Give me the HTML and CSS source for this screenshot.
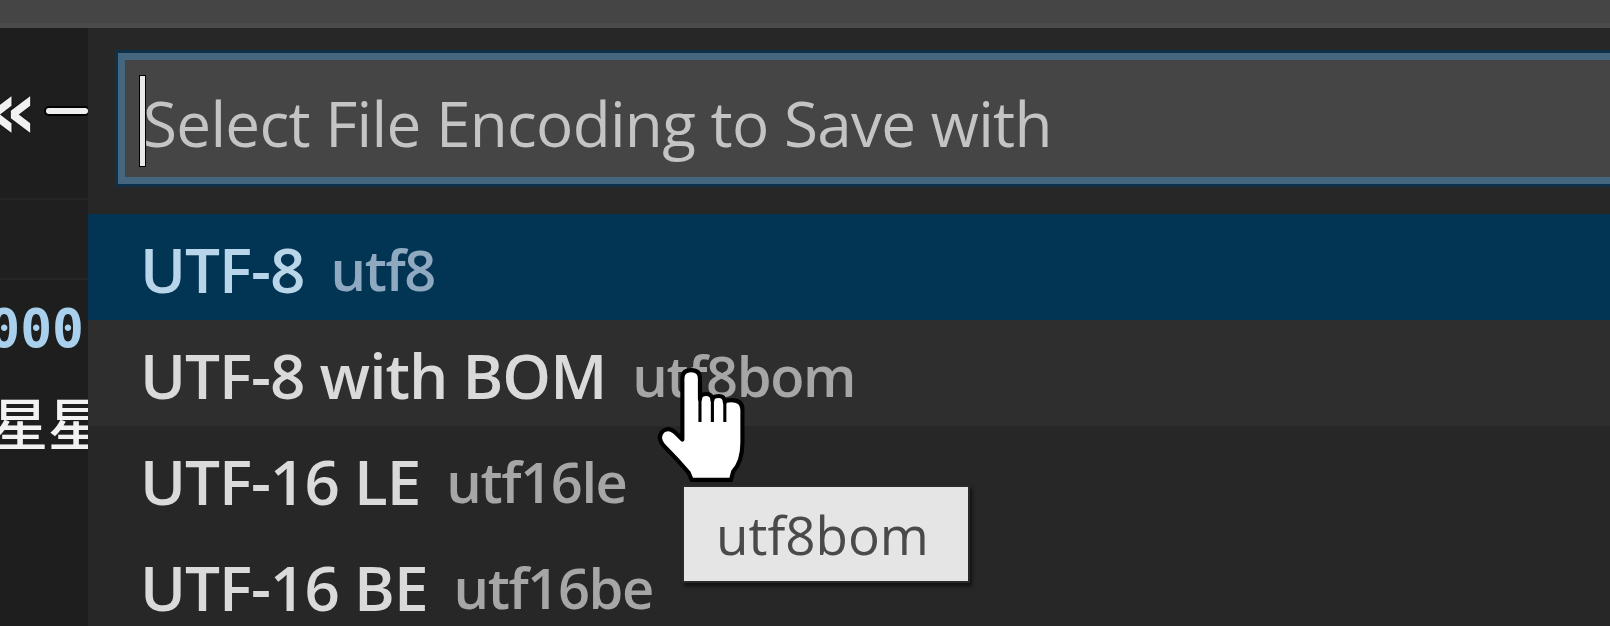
FILE: index.html
```html
<!DOCTYPE html>
<html>
<head>
<meta charset="utf-8">
<link rel="stylesheet" href="styles.css">
</head>
<body>
<div class="topbar"></div>
<div class="main">
  <div class="editor">
    <div class="line line-a"><span class="chev">«</span><span class="dash"></span></div>
    <div class="line line-cur"></div>
    <div class="line line-num"><span>2000</span></div>
    <div class="line line-cjk"><span>星星</span></div>
  </div>
  <div class="quickpick">
    <div class="inputbox">
      <span class="caret"></span>
      <span class="placeholder">Select File Encoding to Save with</span>
    </div>
    <div class="list">
      <div class="row selected"><span class="label">UTF-8</span><span class="desc">utf8</span></div>
      <div class="row hover"><span class="label">UTF-8 with BOM</span><span class="desc">utf8bom</span></div>
      <div class="row"><span class="label">UTF-16 LE</span><span class="desc">utf16le</span></div>
      <div class="row"><span class="label">UTF-16 BE</span><span class="desc">utf16be</span></div>
    </div>
  </div>
</div>
<div class="tooltip">utf8bom</div>
<svg class="hand" width="96" height="116" viewBox="-4 -4 90 112">
  <path d="M23,8 Q23,0 31.5,0 Q40,0 40,8 L40,28 Q40,23 46,23 Q52,23 52,29 Q52,25 58,25 Q64,25 64,31 Q64,29 70,29 Q81,29 81,38 L81,70 Q81,88 72,98 L70,106 L32,106 L29,99 Q18,86 5,73 Q-2,65 4,59 Q10,54 17,61 L23,67 Z" fill="#ffffff" stroke="#000000" stroke-width="4" stroke-linejoin="round"/>
  <path d="M40,28 L40,50 M52,29 L52,50 M64,31 L64,50" stroke="#000000" stroke-width="3" fill="none"/>
</svg>
</body>
</html>
```

FILE: styles.css
```css
html, body {
  margin: 0;
  padding: 0;
}
body {
  width: 1610px;
  height: 626px;
  overflow: hidden;
  background: #262626;
  position: relative;
  font-family: "Open Sans", "Noto Sans", sans-serif;
}
.topbar {
  height: 23px;
  background: #454545;
  border-bottom: 5px solid #4b4b4b;
}
.main {
  display: flex;
  height: 598px;
}
.editor {
  width: 88px;
  flex: none;
  background: #1e1e1e;
  overflow: hidden;
  display: flex;
  flex-direction: column;
}
.line {
  display: flex;
  justify-content: flex-end;
  align-items: center;
  white-space: nowrap;
}
.line-a {
  margin-top: 32px;
  height: 102px;
  justify-content: flex-start;
  gap: 8px;
}
.chev {
  color: #f0f0f0;
  font-family: "DejaVu Sans", sans-serif;
  font-weight: bold;
  font-size: 80px;
  line-height: 1;
  margin-left: -14px;
  text-shadow: 0 0 2px #000;
}
.dash {
  display: block;
  width: 50px;
  height: 6px;
  background: #eeeeee;
  border-radius: 3px;
  box-shadow: 0 0 0 2px #000;
}
.line-cur {
  margin-top: 36px;
  height: 78px;
  border-top: 2px solid #262626;
  border-bottom: 2px solid #262626;
  background: #1f1f1f;
}
.line-num {
  margin-top: 18px;
  height: 60px;
  color: #a9d0ec;
  font-family: "DejaVu Sans Mono", monospace;
  font-weight: bold;
  font-size: 53px;
  padding-right: 4px;
}
.line-cjk {
  margin-top: 30px;
  height: 64px;
  color: #f2f2f2;
  font-family: "Noto Sans CJK SC", sans-serif;
  font-size: 56px;
  font-weight: 500;
  justify-content: flex-start;
  margin-left: -8px;
}
.quickpick {
  flex: 1;
  background: #272727;
  padding-top: 22px;
  padding-left: 27px;
  overflow: hidden;
}
.inputbox {
  height: 117px;
  background: #454545;
  border: 7px solid #44667f;
  border-right: none;
  box-shadow: 0 0 0 3px #0f3049;
  margin-top: 3px;
  margin-left: 3px;
  display: flex;
  align-items: center;
  padding-left: 15px;
}
.caret {
  display: block;
  width: 5px;
  height: 90px;
  background: #e8e8e8;
  box-shadow: 0 0 0 1px #000;
  margin-top: 4px;
}
.placeholder {
  color: #c4c4c4;
  font-size: 62px;
  font-weight: 500;
  letter-spacing: -0.7px;
  margin-left: -2px;
  margin-top: 8px;
  white-space: nowrap;
}
.list {
  margin-top: 30px;
  margin-left: -27px;
}
.row {
  height: 106px;
  display: flex;
  align-items: center;
  padding-left: 52px;
  padding-top: 4px;
  box-sizing: border-box;
  gap: 26px;
  white-space: nowrap;
}
.row.selected {
  background: #023453;
}
.row.hover {
  background: #2e2e2e;
}
.label {
  color: #dadada;
  font-size: 62px;
  font-weight: 600;
  letter-spacing: -1px;
}
.desc {
  color: #a6a6a6;
  font-size: 56px;
  font-weight: 600;
  letter-spacing: -1.4px;
}
.selected .label {
  color: #b9d5ea;
}
.selected .desc {
  color: #8ea9c0;
}
.tooltip {
  position: absolute;
  left: 682px;
  top: 485px;
  width: 288px;
  height: 98px;
  box-sizing: border-box;
  background: #e5e5e5;
  border: 2px solid #2a2a2a;
  box-shadow: 2px 3px 4px rgba(0,0,0,0.6);
  color: #4a4a4a;
  font-size: 53px;
  padding-left: 32px;
  display: flex;
  align-items: center;
}
.hand {
  position: absolute;
  left: 653px;
  top: 366px;
}
```
